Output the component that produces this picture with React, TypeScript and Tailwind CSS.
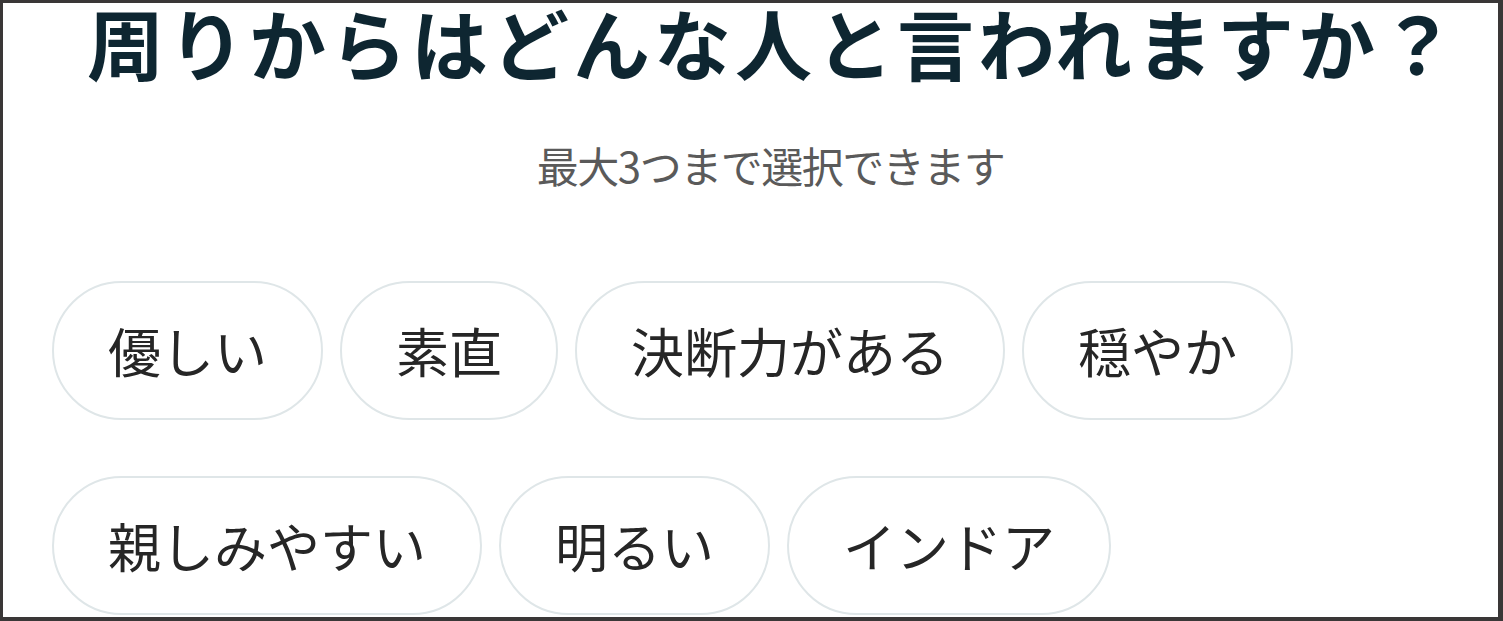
import React from "react";

const chips1 = ["優しい", "素直", "決断力がある", "穏やか"];
const chips2 = ["親しみやすい", "明るい", "インドア"];

function Chip({ label }: { label: string }) {
  return (
    <div className="h-[139px] px-[54px] flex items-center justify-center rounded-full border-2 border-[#dfe6e8] bg-white text-[53px] leading-none text-[#262626] whitespace-nowrap">
      {label}
    </div>
  );
}

export default function App() {
  return (
    <div
      className="w-[1503px] h-[621px] bg-[#3a3737] pt-[3px] pl-[3px] pr-[5px] pb-[4px] overflow-hidden"
      style={{ fontFamily: '"Noto Sans CJK JP", "Noto Sans", sans-serif' }}
    >
      <div className="w-full h-full bg-white overflow-hidden flex flex-col">
        <h1 className="mt-[0px] text-center text-[77px] leading-none font-bold tracking-[4px] text-[#0e2631] whitespace-nowrap pl-[46px]">
          周りからはどんな人と言われますか？
        </h1>
        <p className="mt-[64px] text-center text-[42px] leading-none tracking-[-1.5px] text-[#5a5a5a] pl-[40px]">
          最大3つまで選択できます
        </p>
        <div className="mt-[95px] pl-[49px] flex flex-col gap-[56px]">
          <div className="flex gap-[17px]">
            {chips1.map((c) => (
              <Chip key={c} label={c} />
            ))}
          </div>
          <div className="flex gap-[17px]">
            {chips2.map((c) => (
              <Chip key={c} label={c} />
            ))}
          </div>
        </div>
      </div>
    </div>
  );
}
